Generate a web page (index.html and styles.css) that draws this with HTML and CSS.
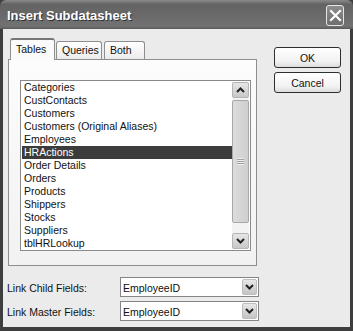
FILE: index.html
```html
<!DOCTYPE html>
<html lang="en">
<head>
  <meta charset="UTF-8" />
  <title>Insert Subdatasheet</title>
  <link rel="stylesheet" href="styles.css">
</head>
<body>
  <div class="window">
    <!-- Title bar -->
    <div class="titlebar">
      <span class="title">Insert Subdatasheet</span>
      <div class="close">
        <svg width="13" height="13" viewBox="0 0 13 13"><path d="M2 2 L11 11 M11 2 L2 11" stroke="#fff" stroke-width="2.2" stroke-linecap="square"/></svg>
      </div>
    </div>

    <div class="body">
      <div class="main">
        <!-- Tabs -->
        <div class="tabs">
          <div class="tab active">Tables</div>
          <div class="tab">Queries</div>
          <div class="tab">Both</div>
        </div>

        <div class="panel">
          <div class="listbox">
            <ul class="items">
              <li>Categories</li>
              <li>CustContacts</li>
              <li>Customers</li>
              <li>Customers (Original Aliases)</li>
              <li>Employees</li>
              <li class="selected">HRActions</li>
              <li>Order Details</li>
              <li>Orders</li>
              <li>Products</li>
              <li>Shippers</li>
              <li>Stocks</li>
              <li>Suppliers</li>
              <li>tblHRLookup</li>
            </ul>
            <div class="scrollbar">
              <div class="sb-btn">
                <svg width="9" height="6" viewBox="0 0 9 6"><path d="M1 5 L4.5 1.5 L8 5" fill="none" stroke="#222" stroke-width="2"/></svg>
              </div>
              <div class="sb-track">
                <div class="sb-thumb">
                  <span class="grip"></span>
                </div>
              </div>
              <div class="sb-btn">
                <svg width="9" height="6" viewBox="0 0 9 6"><path d="M1 1 L4.5 4.5 L8 1" fill="none" stroke="#222" stroke-width="2"/></svg>
              </div>
            </div>
          </div>
        </div>

        <!-- Link fields -->
        <div class="fields">
          <div class="field">
            <label>Link Child Fields:</label>
            <div class="combo">
              <span class="value">EmployeeID</span>
              <span class="drop">
                <svg width="9" height="6" viewBox="0 0 9 6"><path d="M1 1 L4.5 4.5 L8 1" fill="none" stroke="#222" stroke-width="2"/></svg>
              </span>
            </div>
          </div>
          <div class="field">
            <label>Link Master Fields:</label>
            <div class="combo">
              <span class="value">EmployeeID</span>
              <span class="drop">
                <svg width="9" height="6" viewBox="0 0 9 6"><path d="M1 1 L4.5 4.5 L8 1" fill="none" stroke="#222" stroke-width="2"/></svg>
              </span>
            </div>
          </div>
        </div>
      </div>

      <div class="actions">
        <button class="btn">OK</button>
        <button class="btn">Cancel</button>
      </div>
    </div>
  </div>
</body>
</html>
```

FILE: styles.css
```css
* {
  box-sizing: border-box;
  margin: 0;
  padding: 0;
}

body {
  font-family: 'Liberation Sans', Arial, sans-serif;
  font-size: 10.5px;
  color: #111;
  background: #fff;
}

.window {
  width: 353px;
  height: 331px;
  display: flex;
  flex-direction: column;
  background: #3e3e3e;
}

.titlebar {
  height: 29px;
  display: flex;
  align-items: center;
  justify-content: space-between;
  padding: 0 9px 0 7px;
  background: linear-gradient(#8a8a8a, #636363 15%, #6b6b6b 60%, #727272 90%, #5a5a5a);
  border-radius: 6px 6px 0 0;
}

.title {
  color: #fff;
  font-weight: bold;
  font-size: 13px;
  text-shadow: 1px 1px 0 #333;
  margin-top: 1px;
}

.close {
  width: 18px;
  height: 21px;
  margin-top: 1px;
  border: 1px solid #e6e6e6;
  border-radius: 3px;
  background: linear-gradient(#8c8c8c, #6e6e6e);
  display: flex;
  align-items: center;
  justify-content: center;
}

.body {
  flex: 1;
  margin: 0 3px 4px 3px;
  background: #ebebeb;
  display: flex;
  padding: 10px 0 0 5px;
}

.main {
  width: 251px;
}

.tabs {
  display: flex;
  align-items: flex-end;
  height: 20px;
  padding-left: 2px;
  position: relative;
  z-index: 1;
}

.tab {
  height: 18px;
  padding: 2px 5px 0;
  border: 1px solid #8e8e8e;
  border-bottom: none;
  border-radius: 3px 3px 0 0;
  background: linear-gradient(#fff, #ececec);
  margin-right: 1px;
}

.tab:nth-child(2) {
  width: 46px;
}

.tab:nth-child(3) {
  width: 41px;
  margin-left: 1px;
}

.tab.active {
  width: 45px;
  height: 22px;
  margin-bottom: -1px;
  padding-top: 3px;
  background: #fafafa;
  border-top: 2px solid #777;
}

.panel {
  width: 249px;
  height: 207px;
  border: 1px solid #8e8e8e;
  background: linear-gradient(#fcfcfc, #f2f2f2);
  padding: 20px 5px 0 11px;
}

.listbox {
  width: 231px;
  height: 171px;
  border: 1px solid #8a8a8a;
  background: #fff;
  display: flex;
  padding: 0 1px 1px 1px;
}

.items {
  list-style: none;
  flex: 1;
  padding-top: 0;
}

.items li {
  height: 13px;
  line-height: 13px;
  padding-left: 2px;
  white-space: nowrap;
}

.items li.selected {
  background: #3c3c3c;
  color: #fff;
}

.scrollbar {
  width: 17px;
  margin-top: 1px;
  display: flex;
  flex-direction: column;
  background: #f3f3f3;
}

.sb-btn {
  height: 16px;
  border: 1px solid #b5b5b5;
  border-radius: 2px;
  background: linear-gradient(#e6e6e6, #c8c8c8);
  display: flex;
  align-items: center;
  justify-content: center;
}

.sb-track {
  flex: 1;
  padding: 2px 0 10px;
}

.sb-thumb {
  height: 123px;
  border: 1px solid #a8a8a8;
  border-radius: 2px;
  background: linear-gradient(90deg, #dcdcdc, #cfcfcf);
  display: flex;
  align-items: center;
  justify-content: center;
}

.grip {
  width: 7px;
  height: 7px;
  background: repeating-linear-gradient(#eee 0 1px, #a0a0a0 1px 2px);
}

.fields {
  margin-top: 11px;
  display: flex;
  flex-direction: column;
  gap: 4px;
}

.field {
  display: flex;
  align-items: center;
  height: 20px;
}

.field label {
  width: 113px;
  margin-left: -1px;
  padding-top: 1px;
}

.combo {
  width: 139px;
  height: 20px;
  border: 1px solid #858585;
  background: #fff;
  display: flex;
  align-items: center;
  justify-content: space-between;
  padding: 0 1px 0 2px;
}

.combo .value {
  padding-top: 1px;
}

.drop {
  width: 15px;
  height: 16px;
  border: 1px solid #bdbdbd;
  border-radius: 2px;
  background: linear-gradient(#e8e8e8, #c4c4c4);
  display: flex;
  align-items: center;
  justify-content: center;
}

.actions {
  margin-left: 15px;
  margin-top: 8px;
  display: flex;
  flex-direction: column;
  gap: 4px;
}

.btn {
  width: 67px;
  height: 21px;
  font-family: 'Liberation Sans', Arial, sans-serif;
  font-size: 10.5px;
  color: #111;
  border: 1px solid #2e2e2e;
  border-radius: 3px;
  background: linear-gradient(#fff, #f2f2f2 70%, #dcdcdc);
}
```
